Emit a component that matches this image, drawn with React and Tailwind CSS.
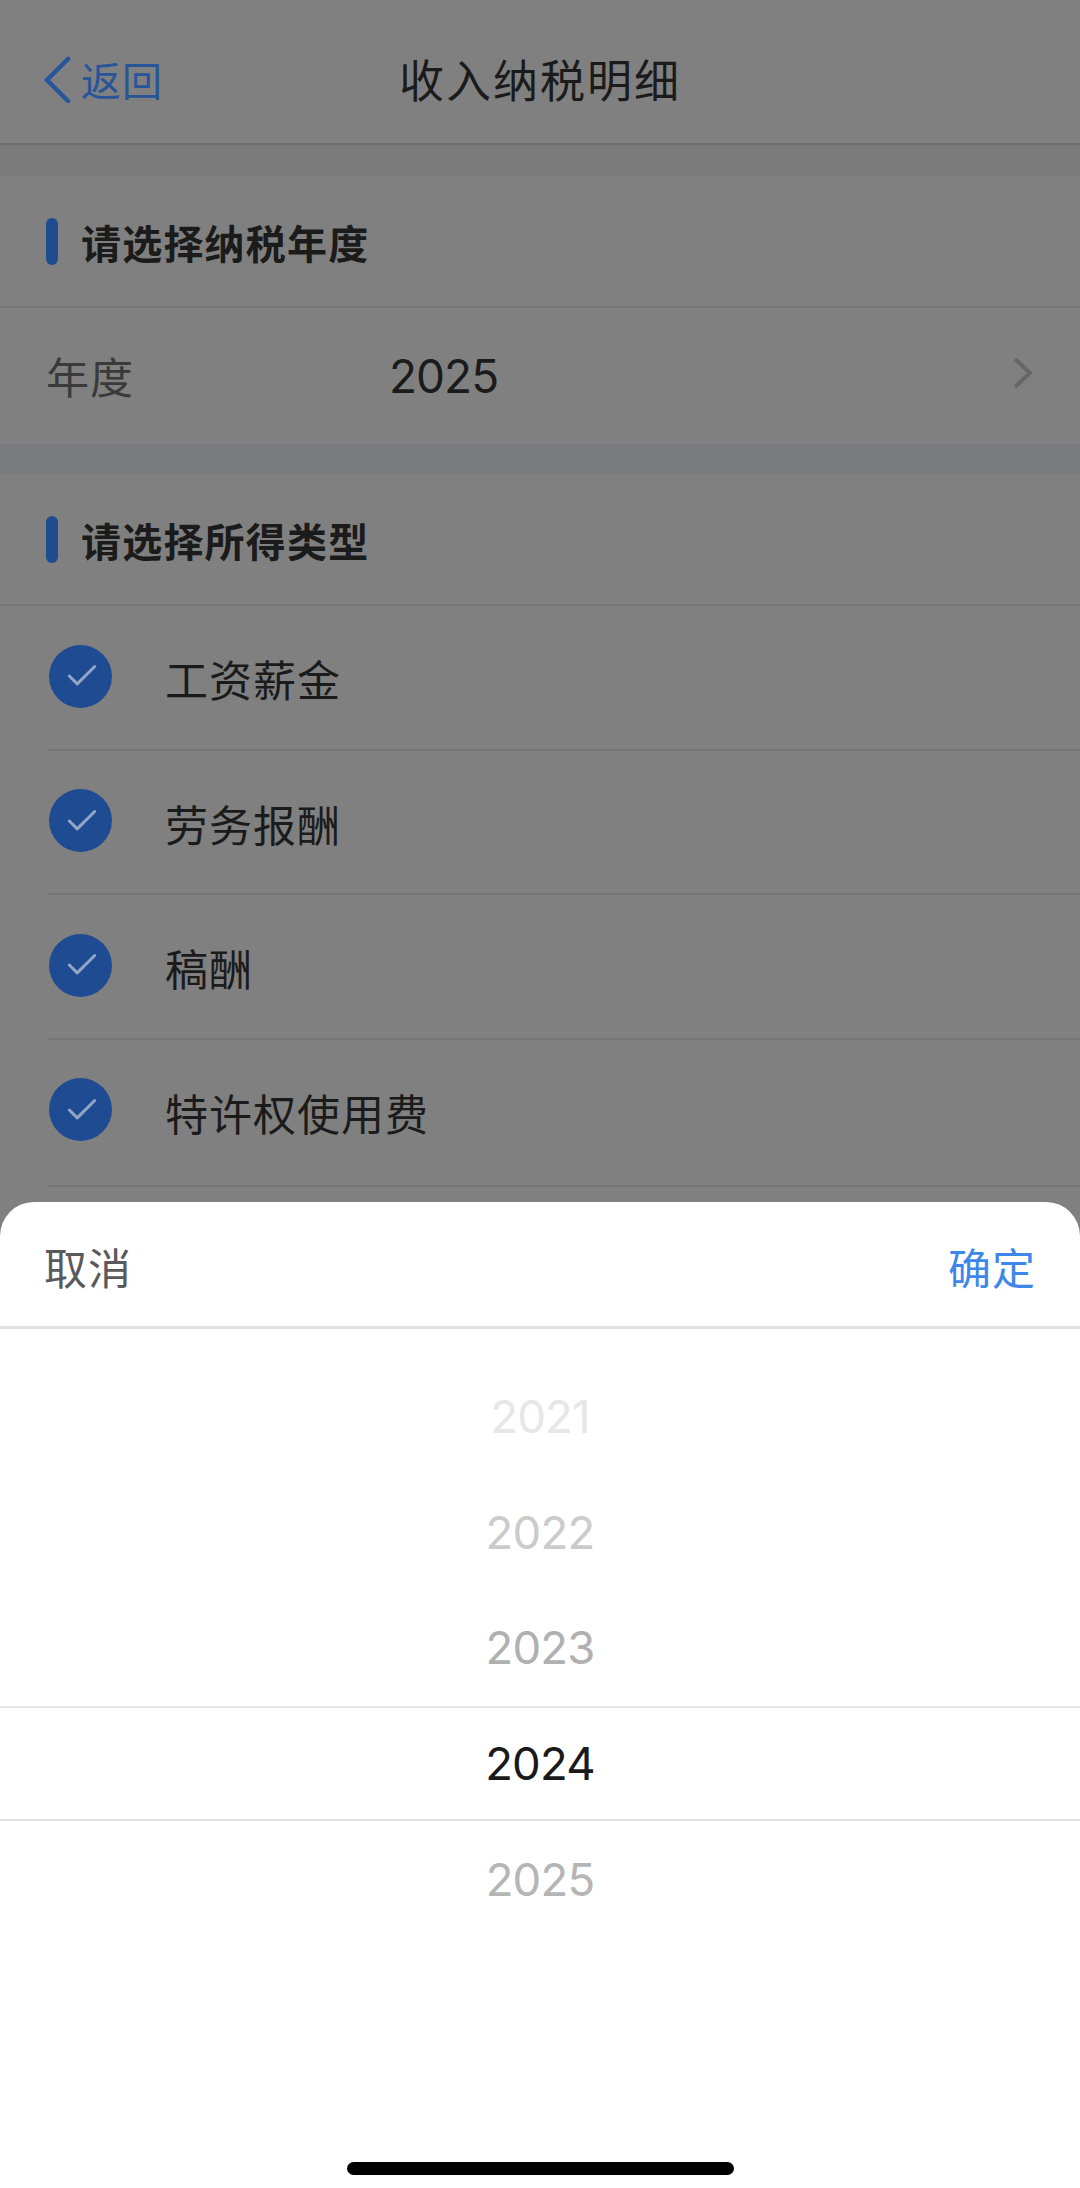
import { Check } from 'lucide-react'

const incomeTypes = ['工资薪金', '劳务报酬', '稿酬', '特许权使用费']

const years = [
  { value: '2021', className: 'text-[#e6e6e6]' },
  { value: '2022', className: 'text-[#cbcbcb]' },
  { value: '2023', className: 'text-[#b0b0b0]' },
  { value: '2024', className: 'text-[#1a1a1a] border-y-2 border-[#e4e4e4]' },
  { value: '2025', className: 'text-[#b5b5b5]' },
]

function NavBar() {
  return (
    <header className="grid h-[145px] grid-cols-3 items-center border-b-2 border-[#6f6f6f] pt-[17px]">
      <button className="flex items-center pl-[43px] text-[#28549a]">
        <svg className="h-[48px] w-[28px]" viewBox="0 0 28 48" fill="none" stroke="currentColor" strokeWidth="4.5" strokeLinecap="round">
          <path d="M25 3 L4 24 L25 45" />
        </svg>
        <span className="ml-[10px] pt-[4px] text-[40px] leading-[48px] tracking-[1px]">返回</span>
      </button>
      <h1 className="pt-[3px] text-center text-[45px] leading-[48px] tracking-[2px] whitespace-nowrap text-[#1b1b1b]">收入纳税明细</h1>
    </header>
  )
}

function SectionTitle({ children }) {
  return (
    <div className="flex h-[132px] items-center border-b-2 border-[#767676] pt-[1px] pl-[46px]">
      <span className="h-[47px] w-[12px] rounded-full bg-[#1f4b8f]" />
      <h2 className="ml-[23px] pt-[7px] text-[40px] leading-[48px] font-bold tracking-[1.2px] text-[#1b1b1b]">{children}</h2>
    </div>
  )
}

function YearRow() {
  return (
    <div className="flex h-[136px] items-center pr-[46px] pl-[46px]">
      <span className="w-[343px] pt-[3px] text-[43px] leading-[48px] tracking-[1px] text-[#3a3a3a]">年度</span>
      <span className="text-[46px] leading-[48px] tracking-[-1px] text-[#1b1b1b]">2025</span>
      <svg className="mt-[-6px] ml-auto h-[32px] w-[22px]" viewBox="0 0 22 32" fill="none" stroke="#666666" strokeWidth="4">
        <path d="M3 2 L18 16 L3 30" />
      </svg>
    </div>
  )
}

function TypeRow({ label }) {
  return (
    <li className="ml-[48px] flex h-[144.6px] items-center border-b-2 border-[#757575] last:h-[147px] last:pb-[3px]">
      <span className="mt-[-2px] ml-[1px] flex size-[63px] items-center justify-center rounded-full bg-[#1f4b93] pl-[3px]">
        <Check className="size-[38px] text-[#93a5c4]" strokeWidth={1.9} />
      </span>
      <span className="ml-[53px] pt-[8px] text-[43px] leading-[48px] tracking-[1px] text-[#1b1b1b]">{label}</span>
    </li>
  )
}

function YearPicker() {
  return (
    <section className="absolute inset-x-0 bottom-0 flex h-[986px] flex-col rounded-t-[34px] bg-white">
      <div className="flex h-[127px] items-center justify-between border-b-[3px] border-[#e2e2e2] px-[44px] pt-[10px] text-[43px] leading-[48px] tracking-[1px]">
        <button className="text-[#5a5a5c]">取消</button>
        <button className="text-[#3f86ea]">确定</button>
      </div>
      <ul className="mt-[30px]">
        {years.map((year) => (
          <li
            key={year.value}
            className={`flex h-[115.6px] items-center justify-center pt-[1px] text-[45.5px] tracking-[-0.8px] ${year.className}`}
          >
            {year.value}
          </li>
        ))}
      </ul>
      <div className="mx-auto mt-auto mb-[13px] h-[13px] w-[387px] rounded-full bg-black" />
    </section>
  )
}

export default function App() {
  return (
    <div className="relative h-[2188px] w-[1080px] overflow-hidden bg-[#808080] font-[Inter,'Noto_Sans_CJK_SC',sans-serif]">
      <NavBar />
      <div className="h-[31px] bg-[#7b7b7b]" />
      <SectionTitle>请选择纳税年度</SectionTitle>
      <YearRow />
      <div className="h-[30px] bg-[#7a7b7e]" />
      <SectionTitle>请选择所得类型</SectionTitle>
      <ul>
        {incomeTypes.map((label) => (
          <TypeRow key={label} label={label} />
        ))}
      </ul>
      <YearPicker />
    </div>
  )
}
